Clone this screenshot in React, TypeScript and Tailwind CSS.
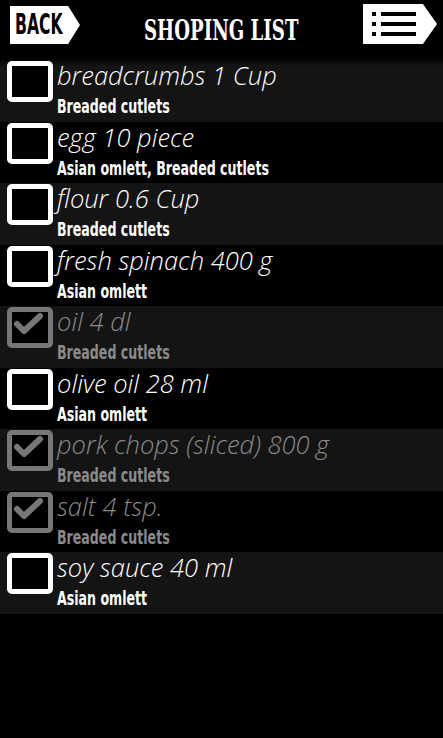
import React from 'react';

interface Item {
  name: string;
  recipes: string;
  done: boolean;
}

const ITEMS: Item[] = [
  { name: 'breadcrumbs 1 Cup', recipes: 'Breaded cutlets', done: false },
  { name: 'egg 10 piece', recipes: 'Asian omlett, Breaded cutlets', done: false },
  { name: 'flour 0.6 Cup', recipes: 'Breaded cutlets', done: false },
  { name: 'fresh spinach 400 g', recipes: 'Asian omlett', done: false },
  { name: 'oil 4 dl', recipes: 'Breaded cutlets', done: true },
  { name: 'olive oil 28 ml', recipes: 'Asian omlett', done: false },
  { name: 'pork chops (sliced) 800 g', recipes: 'Breaded cutlets', done: true },
  { name: 'salt 4 tsp.', recipes: 'Breaded cutlets', done: true },
  { name: 'soy sauce 40 ml', recipes: 'Asian omlett', done: false },
];

function CheckBox({ checked }: { checked: boolean }) {
  return (
    <div
      className={`w-[46px] h-[41px] rounded-[5px] border-[5px] flex-shrink-0 bg-black ${
        checked ? 'border-[#777777]' : 'border-white'
      }`}
    >
      {checked && (
        <svg width="36" height="31" viewBox="0 0 36 31">
          <path d="M5 12 L12 19 L28 4" fill="none" stroke="#777777" strokeWidth="6" strokeLinecap="round" strokeLinejoin="round" />
        </svg>
      )}
    </div>
  );
}

export default function App() {
  return (
    <div className="w-[443px] h-[738px] bg-black overflow-hidden">
      {/* Header */}
      <div className="h-[60px] flex items-start">
        <div className="ml-[10px] mt-[6px] w-[70px] h-[38px] bg-white [clip-path:polygon(0_0,83%_0,100%_50%,83%_100%,0_100%)] pl-[5px]">
          <span className="block text-black font-bold text-[28px] leading-[38px] origin-left scale-x-[0.62] [font-family:'DejaVu_Sans_Condensed','DejaVu_Sans',sans-serif]">
            BACK
          </span>
        </div>
        <div className="flex-1 text-center pt-[14px]">
          <span className="inline-block text-white font-bold text-[28px] leading-[34px] scale-x-[0.72] [font-family:'DejaVu_Serif_Condensed','DejaVu_Serif',serif]">
            SHOPING LIST
          </span>
        </div>
        <div className="mr-[6px] mt-[4px] w-[74px] h-[40px] bg-white [clip-path:polygon(0_0,81%_0,100%_50%,81%_100%,0_100%)] flex flex-col justify-center gap-[6px] pl-[9px]">
          {[0, 1, 2].map((i) => (
            <div key={i} className="flex items-center gap-[5px]">
              <div className="w-[4px] h-[4px] bg-black" />
              <div className="w-[35px] h-[4px] bg-black" />
            </div>
          ))}
        </div>
      </div>

      {/* List */}
      <div className="flex flex-col">
        {ITEMS.map((item, i) => (
          <div
            key={item.name}
            className={`h-[61.5px] flex items-start gap-[4px] pl-[7px] ${
              i % 2 === 0 ? 'bg-[#141414]' : 'bg-black'
            } ${i === 0 ? 'bg-[linear-gradient(to_bottom,#050505_0px,#141414_6px)]' : ''}`}
          >
            <div className="pt-[1px]">
              <CheckBox checked={item.done} />
            </div>
            <div className="flex flex-col min-w-0">
              <span
                className={`text-[25.5px] leading-[30px] italic font-light whitespace-nowrap [font-family:'Open_Sans',sans-serif] ${
                  item.done ? 'text-[#8a8a8a]' : 'text-white'
                }`}
              >
                {item.name}
              </span>
              <span
                className={`mt-[4px] text-[20px] leading-[24px] font-bold whitespace-nowrap origin-left scale-x-[0.7] [font-family:'DejaVu_Sans_Condensed','DejaVu_Sans',sans-serif] ${
                  item.done ? 'text-[#8a8a8a]' : 'text-white'
                }`}
              >
                {item.recipes}
              </span>
            </div>
          </div>
        ))}
      </div>
    </div>
  );
}
